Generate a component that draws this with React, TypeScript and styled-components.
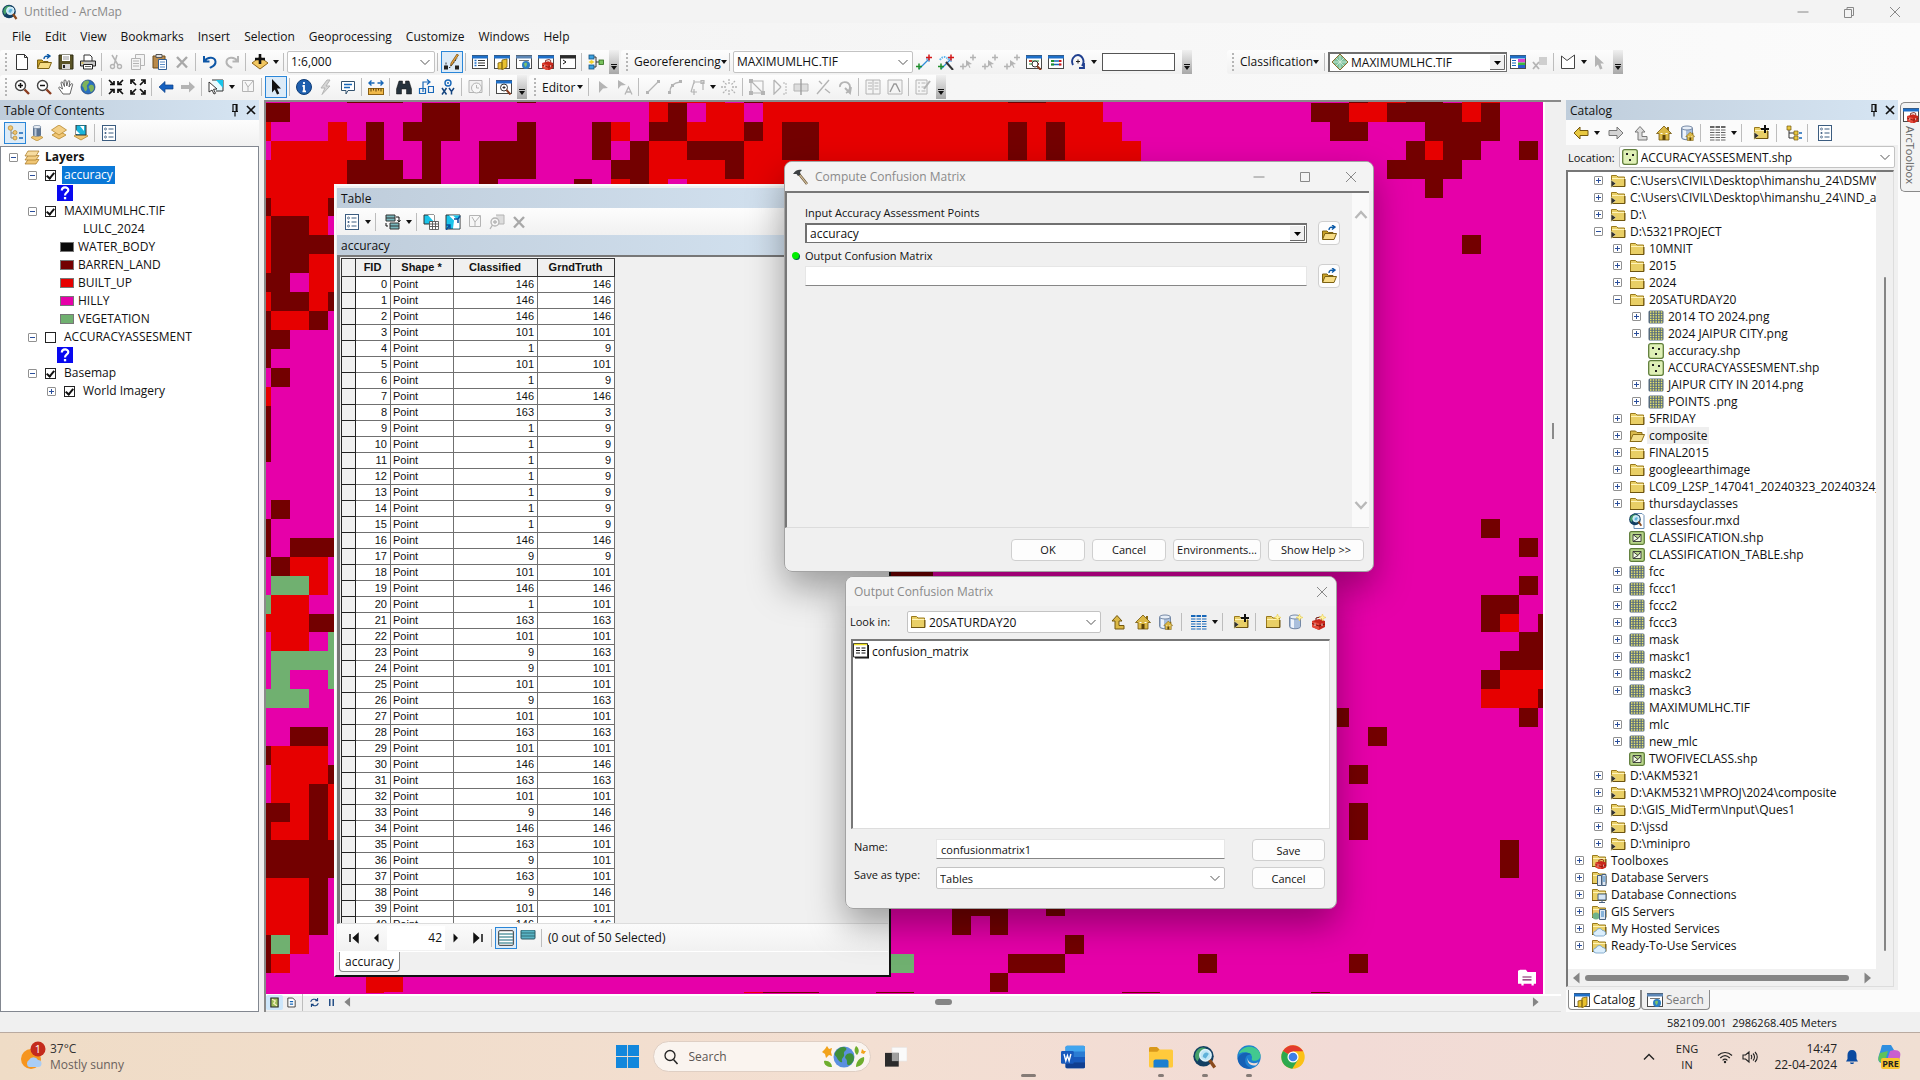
import React from 'react';
import styled, { createGlobalStyle, css } from 'styled-components';

const ui = `'Open Sans', 'Noto Sans', sans-serif`;
const grey = '#b4b4b4';

const Global = createGlobalStyle`
  *, *::before, *::after { box-sizing: border-box; }
  body { margin: 0; background: #f0f0f0; }
  body, button, input, select { font-family: ${ui}; font-size: 12px; color: #111; }
  button { border: 0; background: none; padding: 0; cursor: default; white-space: nowrap; }
  ul { margin: 0; padding: 0; list-style: none; }
  svg { display: block; flex: none; }
`;

/* ---------- icons, all on a 16 unit grid ---------- */
const Folder = ({ dark = false }: { dark?: boolean }) => (
  <>
    <path d="M1.5 4V2.5h5L8 4h6.500v9.500h-13z" fill="#e9cf66" stroke="#9a7a1c" />
    <path d="M2 5.500h12.500" stroke="#fff3b8" />
    <path d="M1 13.500h14V6" stroke="#6e5510" fill="none" />
    {dark && <path d="M1 7l5 3.500-5 4z" fill="#333" stroke="#f6e7a5" strokeWidth=".6" />}
  </>
);
const OpenFolder = (
  <>
    <path d="M1.500 14V6H6l1.500 1.500H12V9" fill="#c9a227" stroke="#7d6213" />
    <path d="M1.500 14.500l2.500-6h11.500l-2.500 6z" fill="#f6dc85" stroke="#7d6213" />
  </>
);
const Cyl = (
  <>
    <path d="M2.500 3v9.500c0 3 11 3 11 0V3" fill="#a9bfdc" stroke="#7488a5" />
    <path d="M4 5v8c1.500 1 3 1 3 1V5z" fill="#eef4fb" />
    <ellipse cx="8" cy="3" rx="5.500" ry="2" fill="#e7eef7" stroke="#7488a5" />
  </>
);
const House = (
  <>
    <path d="M11 2h2v4h-2z" fill="#8a6a15" />
    <path d="M8 1L.500 8.500H3v6.500h10V8.500h2.500z" fill="#dbb845" stroke="#72570e" strokeWidth=".8" />
    <path d="M6.500 10h3v5h-3z" fill="#5b430a" />
    <path d="M4.500 8.500h2M9.500 8.500h2" stroke="#fff" />
  </>
);
const Win = ({ c = '#1e6fc8' }: { c?: string }) => (
  <>
    <rect x=".5" y="1.500" width="15" height="13" fill="#fff" stroke="#4a4a4a" />
    <path d="M0 3h16" stroke={c} strokeWidth="3" />
  </>
);
const Toolbox = (
  <>
    <path d="M2 7l7-2 6 2v6l-6 3-7-3z" fill="#c8271b" />
    <path d="M2 7l7 2.500V16l-7-3z" fill="#e44a3a" />
    <path d="M6 6V4l4-1 2 1v2" stroke="#6b0f08" fill="none" />
    <path d="M2 9.500l7 2.500 6-2" stroke="#7d1209" fill="none" />
    <path d="M5 9.500v2.500M12 9.500v2.500" stroke="#f3d7d2" />
  </>
);
const Earth = (
  <>
    <circle cx="8" cy="8" r="7" fill="#2a6fbf" stroke="#1c3f6e" strokeWidth=".7" />
    <path d="M3 4c2-3 6-3 6-1S6 6 7 8s-1 5-2 4-1-4-3-5zM10 6c3-1 4 1 4 3s-2 4-3 4-1-3-2-4 0-2 1-3z" fill="#7fb35a" />
  </>
);
const ArcGlobe = (
  <>
    <circle cx="7" cy="7.500" r="6.800" fill="#123f63" />
    <path d="M1.500 6c1-4 5-5 7-4L6 5 3 11C1.500 9.500 1 8 1.500 6z" fill="#46a06a" />
    <circle cx="8.300" cy="6.800" r="3.800" fill="#bfe6f6" stroke="#dff3fb" />
    <path d="M6.500 8c0-3 3-4 4-2l-2 3z" fill="#5fb1d9" />
    <path d="M11 10l3.500 5" stroke="#8a4a1c" strokeWidth="2.200" />
  </>
);
const Raster = (
  <>
    <rect x=".5" y="1.500" width="15" height="13" rx="1.500" fill="#566b7d" />
    {[3, 5.5, 8, 10.5, 13].map(y => (
      <path key={y} d={`M2 ${y}h12.500`} stroke="#efe96a" strokeWidth="1.500" strokeDasharray="1.500 1.200" />
    ))}
  </>
);
const Star = <path d="M12.500 0l1 2.500L16 3.500l-2.500 1-1 2.500-1-2.500L9 3.500l2.500-1z" fill="#fff3a0" stroke="#e6c93c" strokeWidth=".5" />;
const TableGrid = ({ c = '#1767b8' }: { c?: string }) => (
  <>
    <path d="M0 2h16" stroke={c} strokeWidth="2" strokeDasharray="4.500 1" />
    <path d="M0 5h16M0 7.500h16M0 10h16M0 12.500h16M0 15h16" stroke={c} strokeDasharray="4.500 1" />
  </>
);
const ListBox = ({ c = '#3b5c80' }: { c?: string }) => (
  <>
    <rect x="1.500" y=".5" width="13" height="15" fill="#fff" stroke={c} />
    <circle cx="4.500" cy="4" r="1" fill="none" stroke={c} strokeWidth=".8" />
    <circle cx="4.500" cy="8" r="1" fill={c} />
    <circle cx="4.500" cy="12" r="1" fill="none" stroke={c} strokeWidth=".8" />
    <path d="M7.500 4h5M7.500 8h5M7.500 12h5" stroke={c} />
  </>
);
const Layer = ({ y = 0 }: { y?: number }) => (
  <path d={`M8 ${3 + y}l7 4-7 4-7-4z`} fill="#f0c674" stroke="#b5862b" strokeWidth=".8" />
);
const Cloud = <path d="M5 15a2.500 2.500 0 010-5 3.500 3.500 0 016.500-.500A2.800 2.800 0 0112.500 15z" fill="#dbeefc" stroke="#6f9cc4" strokeWidth=".8" />;
const Cross = (a: string, b: string) => (
  <>
    <path d="M3 15l9-9" stroke="#2e8bd8" strokeWidth="1.300" />
    <path d="M10 5h3v3" fill="none" stroke="#2e8bd8" />
    <path d="M0 12.500h6M3 9.500v6" stroke={a} strokeWidth="1.500" />
    <path d="M10 3.500h6M13 .5v6" stroke={b} strokeWidth="1.500" />
  </>
);
const GreyCross = (
  <>
    <path d="M10 3.500h6M13 .5v6M0 12.500h6M3 9.500v6" stroke={grey} strokeWidth="1.500" />
    <path d="M6 6l6 4-3 .5 1.500 3-1 .5-1.500-3-2 2z" fill={grey} />
  </>
);

const icons: Record<string, React.ReactNode> = {
  newDoc: <path d="M2.500.5h8l3 3v12h-11zM10.500.5v3h3" fill="#fff" stroke="#333" />,
  open: <>{OpenFolder}<path d="M8 5c0-3 2-3 5-3M11 0l3 2-3 2.500" fill="none" stroke="#0b5aa8" strokeWidth="1.400" /></>,
  save: <><path d="M1 1h14v14H1z" fill="#5a5426" stroke="#2a2810" /><path d="M4 1h8v6H4z" fill="#fff" /><path d="M4 10h8v5H4z" fill="#d8d8d8" /><path d="M5 11h2v3H5z" fill="#222" /><path d="M5 3h6M5 5h6" stroke="#999" /></>,
  print: <><path d="M4 7V1h6l2 2v4" fill="#fff" stroke="#333" /><path d="M.5 7h15v5H.5z" fill="#c9c9c9" stroke="#222" /><path d="M3.500 10.500h9v4.500h-9z" fill="#fff" stroke="#222" /><path d="M1.500 9h2" stroke="#e4b400" /><path d="M5 12.500h6" stroke="#666" /></>,
  cut: <><path d="M4 1l6 10M9 1L6 11" stroke={grey} strokeWidth="1.500" fill="none" /><circle cx="4.500" cy="12.500" r="2" stroke={grey} fill="none" strokeWidth="1.400" /><circle cx="11.500" cy="12.500" r="2" stroke={grey} fill="none" strokeWidth="1.400" /></>,
  copy: <><path d="M5.500.5h9v11h-9z" fill="#f4f4f4" stroke={grey} /><path d="M1.500 4.500h9v11h-9z" fill="#f4f4f4" stroke={grey} /><path d="M3 7h6M3 9.500h6M3 12h6" stroke={grey} /></>,
  paste: <><path d="M1 2h12v12H1z" fill="#b98a4b" stroke="#6a4a1c" /><path d="M4 .5h6v3H4z" fill="#ddd" stroke="#555" /><path d="M6.500 5.500h8v10h-8z" fill="#fff" stroke="#335f94" /><path d="M8 8h5M8 10.500h5M8 13h5" stroke="#5b8cc5" /></>,
  del: <path d="M3 3l10 10.500M13 3L3 13.500" stroke="#a8a8a8" strokeWidth="2.400" />,
  undo: <path d="M2 2v5.500h5.500M2.500 7C6 2 13 3 13.500 7.500S9 13 8 14" stroke="#0d56a6" strokeWidth="2" fill="none" />,
  redo: <path d="M14 2v5.500H8.500M13.500 7C10 2 3 3 2.500 7.500S7 13 8 14" stroke={grey} strokeWidth="2" fill="none" />,
  add: <><path d="M8 3l8 6-8 6-8-6z" fill="#f2c760" stroke="#8c6418" /><path d="M8 0v10M3 5h10" stroke="#111" strokeWidth="2.600" /></>,
  editPen: <><path d="M2 13.500h4l7-9M2 13.500V8" stroke="#333" fill="none" strokeDasharray="2 1" /><path d="M0 11.500h4v4H0zM11 11.500h4v4h-4z" fill="#222" /><path d="M14.500 1l-6 9-2 2 .5-3L13 0z" fill="#eda63c" stroke="#69440b" strokeWidth=".7" /></>,
  toc: <><Win /><path d="M2.500 6.500h2M2.500 9h2M2.500 11.500h2" stroke="#1e6fc8" strokeWidth="1.400" /><path d="M6 6.500h7M6 9h7M6 11.500h7" stroke="#333" /></>,
  catWin: <><Win /><path d="M4 9l4-1v7H4zM8 6l5-1v8l-5 3z" fill="#e8c12f" stroke="#7c5f0b" strokeWidth=".8" /></>,
  searchWin: <><Win c="#5c86b5" /><path d="M3 6.500h10" stroke="#777" /><circle cx="10" cy="11" r="4" fill="#2e7fc2" /><path d="M8 10c1-2 3-1 3 0s-1 3-2 3z" fill="#7cc36a" /></>,
  toolWin: <><Win /><g transform="translate(2.500 3) scale(.85)">{Toolbox}</g></>,
  pyWin: <><Win c="#2b2b2b" /><path d="M3 6l3 2-3 2" stroke="#111" fill="none" /></>,
  model: <><path d="M5 3h3v10H5M8 8h3" stroke="#333" fill="none" /><rect x="1" y="1" width="5" height="4" fill="#3aa0e0" stroke="#17527c" strokeWidth=".8" /><rect x="1" y="11" width="5" height="4" fill="#3aa0e0" stroke="#17527c" strokeWidth=".8" /><path d="M3.500 6l3 2-3 2-3-2z" fill="#f4d32d" /><rect x="11" y="6" width="4.500" height="4.500" fill="#79c25d" stroke="#2f6b1b" strokeWidth=".8" /></>,
  zin: <><circle cx="6.500" cy="6.500" r="5" fill="#fff" stroke="#444" strokeWidth="1.400" /><path d="M4 6.500h5M6.500 4v5" stroke="#111" strokeWidth="1.500" /><path d="M10.500 10.500l4.500 4.500" stroke="#8a3b1f" strokeWidth="2.400" /></>,
  zout: <><circle cx="6.500" cy="6.500" r="5" fill="#fff" stroke="#444" strokeWidth="1.400" /><path d="M4 6.500h5" stroke="#111" strokeWidth="1.500" /><path d="M10.500 10.500l4.500 4.500" stroke="#8a3b1f" strokeWidth="2.400" /></>,
  pan: <path d="M5 15L1 9.500c-1-1.500 1-2 2-.5L4.500 10 3 4c0-1.500 1.500-1.500 2 0L6.500 7.500 6 2c0-1.500 2-1.500 2 0l.8 5L10 2.500c.5-1.500 2-1 1.800.5L11 8l2-3c1-1 2 0 1.500 1L12 15z" fill="#fff" stroke="#555" strokeWidth=".9" />,
  earth: Earth,
  fixIn: <path d="M1 1l4.500 4.500M2 5.500h4V2M15 1l-4.500 4.500M14 5.500h-4V2M1 15l4.500-4.500M2 10.500h4V14M15 15l-4.500-4.500M14 10.500h-4V14" stroke="#111" strokeWidth="1.700" fill="none" />,
  fixOut: <path d="M6 6L1.500 1.500M1 5V1h4M10 6l4.500-4.500M15 5V1h-4M6 10l-4.500 4.500M1 11v4h4M10 10l4.500 4.500M15 11v4h-4" stroke="#111" strokeWidth="1.700" fill="none" />,
  back: <path d="M1 8l6-5.500V6h8v4H7v3.500z" fill="#1560bf" stroke="#0b3f86" strokeWidth=".7" />,
  fwd: <path d="M15 8L9 2.500V6H1v4h8v3.500z" fill={grey} />,
  select: <><path d="M4 1h11v11H8" fill="#e8fbff" stroke="#333" /><path d="M8 1h7v8z" fill="#19c4ea" /><path d="M1 3l8 7-3.500.3 2 4-1.500.7-2-4L1 13z" fill="#fff" stroke="#222" strokeWidth=".9" /></>,
  clear: <path d="M2.500 1.500h11v11h-11zM5 3l3 5 5-6M8 8v4" fill="#f6f6f6" stroke={grey} />,
  cursor: <path d="M4 0l9 9.500H9l2.300 5-2.300 1L6.800 10.500 4 13.500z" fill="#111" />,
  info: <><circle cx="8" cy="8" r="7.500" fill="#1e5fae" stroke="#0f3d78" /><path d="M8 3v2M6.500 7H8v5M6.500 12.300h3.500" stroke="#fff" strokeWidth="1.800" /></>,
  bolt: <path d="M9 1L3 9h4l-3 6.500L12 7H8l4-6z" fill="#d6d6d6" stroke={grey} />,
  html: <><path d="M1.500 2.500h13v9H8l-2 3.500v-3.500H1.500z" fill="#fff" stroke="#34536f" /><path d="M4 5.500h8M4 8.500h6" stroke="#1767b8" strokeWidth="1.400" /></>,
  measure: <><rect x=".5" y="9.500" width="15" height="6" fill="#f0b849" stroke="#8a5f12" /><path d="M3 9.500v3M5.500 9.500v2M8 9.500v3M10.500 9.500v2M13 9.500v3" stroke="#5d3f08" /><path d="M1 4h5.500M3.500 1.500L1 4l2.500 2.500M15 4H9.500M12.500 1.500L15 4l-2.500 2.500" stroke="#1767b8" strokeWidth="1.400" fill="none" /></>,
  binoc: <path d="M3 2h3.500v3h3V2H13l2.500 8v5h-5v-5h-5v5h-5v-5z" fill="#26323c" stroke="#111" strokeWidth=".5" />,
  route: <path d="M5 13V3h6M9 .5L12 3 9 5.500M1.500 9.500h6v5h-6zM10.500 7.500h5v6h-5z" stroke="#1767b8" fill="none" strokeWidth="1.200" />,
  xy: <><circle cx="8" cy="4" r="3" fill="none" stroke="#1767b8" strokeWidth="1.400" /><circle cx="8" cy="4" r="1" fill="#1767b8" /><path d="M2 9l4.500 6.500M6.500 9L2 15.500M9 9l2.500 3.500L14 9M11.500 12v3.500" stroke="#15457f" strokeWidth="1.500" fill="none" /></>,
  time: <><path d="M1 1.500h13v12H1z" fill="#f2f2f2" stroke={grey} /><circle cx="8.500" cy="9" r="5" fill="#f7f7f7" stroke={grey} /><path d="M8.500 6v3h2.500" stroke={grey} fill="none" /></>,
  magWin: <><Win /><circle cx="8" cy="8.500" r="3.500" fill="#fff" stroke="#333" /><path d="M6.500 8.500h3M8 7v3" stroke="#333" /><path d="M10.500 11l4 4.500" stroke="#8a3b1f" strokeWidth="2" /></>,
  gArrow: <path d="M4 2l9 7-5 .5L4 14z" fill={grey} />,
  gArrowA: <><path d="M1 1l8 5-5 .5L1 10z" fill={grey} /><path d="M8 15.500L11.500 8l3.500 7.500M9.500 13h4" stroke={grey} fill="none" strokeWidth="1.300" /></>,
  gLine: <><path d="M2 14L14 2" stroke={grey} strokeWidth="1.300" /><path d="M1 12h3v3H1zM12 1h3v3h-3z" fill={grey} /></>,
  gArc: <><path d="M3 13C3 8 6 4 13 3" stroke={grey} strokeWidth="1.300" fill="none" /><path d="M1 12h3v3H1zM12 1h3v3h-3zM4 5h3v3H4z" fill={grey} /></>,
  gPoly: <path d="M2 13L5 3h9v8M5 1v4M12 1.500h3v3h-3zM2 13h6M5 10v6" stroke={grey} strokeWidth="1.200" fill="none" />,
  gBurst: <path d="M8 0v5M8 11v5M0 8h5M11 8h5M2 2l4 4M14 2l-4 4M2 14l4-4M14 14l-4-4" stroke={grey} strokeDasharray="2 1" strokeWidth="1.300" />,
  gVert: <><path d="M2 2h12v12H2zM2 2l12 12" stroke={grey} fill="none" strokeWidth="1.100" /><path d="M0 0h4v4H0zM12 12h4v4h-4zM0 12h4v4H0z" fill={grey} /></>,
  gResh: <><path d="M3 1v14l7-7M3 1l7 7" stroke={grey} fill="none" strokeWidth="1.300" /><path d="M12 4h3v11h-3" stroke={grey} fill="none" strokeDasharray="2 1" /></>,
  gCut: <><path d="M1 5h14v7H1z" fill="#ddd" stroke={grey} /><path d="M8 0v16" stroke="#999" strokeWidth="1.300" /></>,
  gSplit: <path d="M2 15L14 1M4 2l3 3M10 10l5 4" stroke={grey} strokeWidth="1.400" />,
  gRot: <path d="M3 8C2 2 13 1 13 8c0 3-2 5-4 6M8 9l5 5 1-6" stroke={grey} strokeWidth="1.900" fill="none" />,
  gTable: <path d="M1 1h14v14H1zM8 1v14M3 4h4M3 7h4M3 10h4M9.500 4h4M9.500 7h4M9.500 10h4" stroke={grey} fill="#f5f5f5" />,
  gSketch: <><path d="M1 1h14v14H1z" fill="#f5f5f5" stroke={grey} /><path d="M3 13l4-8h2l4 8" stroke="#999" fill="none" strokeWidth="1.400" /></>,
  gForm: <><path d="M1 1h11v14H1zM3 4h2M3 8h2M3 12h2M6.500 4h4M6.500 8h4M6.500 12h4" stroke={grey} fill="#f5f5f5" /><path d="M15 2L9 10" stroke={grey} strokeWidth="2" /></>,
  cp: Cross('#1f8f2b', '#d41818'),
  cpAuto: <>{Cross('#1f8f2b', '#d41818')}<path d="M2 6c2-4 7-4 8 0" stroke="#5fb8f0" strokeDasharray="1.500 1" fill="none" strokeWidth="2" /><path d="M8 8l7 8" stroke="#333" strokeWidth="2" /></>,
  gcp: GreyCross,
  linkWin: <><Win /><path d="M3 7h10M3 10h10" stroke="#1f8f2b" /><path d="M3 7h3M10 10h3" stroke="#d41818" strokeWidth="1.500" /><circle cx="9" cy="10" r="3" fill="#fff" stroke="#333" /><path d="M11 12l4 4" stroke="#8a3b1f" strokeWidth="2" /></>,
  linkTab: <><Win /><path d="M3 7h10M3 10.500h10" stroke="#1767b8" strokeWidth="1.500" /><path d="M3 7h3M3 10.500h3" stroke="#1f8f2b" strokeWidth="2" /><path d="M11 7h2.500M11 10.500h2.500" stroke="#d41818" strokeWidth="2" /></>,
  rot: <><path d="M3 11C0 5 5 1 8 1s8 5 4 11M9 14h5V9" stroke="#1f3f8f" strokeWidth="1.900" fill="none" /><path d="M8 5.500v4M6 7.500h4" stroke="#222" /></>,
  diamond: <><path d="M8 0l8 8-8 8-8-8z" fill="#7fc2a0" stroke="#8a6d2a" /><path d="M4 4l8 8M12 4l-8 8M8 1v14M1 8h14" stroke="#d9f0dd" strokeWidth=".8" /></>,
  train: <><Win /><path d="M2 6.500h4M2 9h4M2 11.500h4" stroke="#1767b8" /><path d="M8 5h7v3.500H8z" fill="#e03fd0" /><path d="M8 8.500h7v2.500H8z" fill="#3fb83f" /><path d="M8 11h7v3H8z" fill="#2a5fd0" /></>,
  gClassX: <><path d="M7 3h8v8H7z" fill="#cfcfcf" /><path d="M1 8l6 7M7 8l-6 7" stroke={grey} strokeWidth="1.800" /></>,
  poly: <path d="M1.500 14.500V2L7 6.500 14.500 1v13.500z" fill="#fff" stroke="#444" />,
  gCursor: <path d="M3 1l9 8.500H8.500l2 5L8 15.500 6 10.500 3 13z" fill={grey} />,
  byOrder: <><path d="M4 4v9h6M4 8h6" stroke="#888" fill="none" /><circle cx="3.500" cy="3" r="2.300" fill="#f0c674" stroke="#b5862b" strokeWidth=".7" /><circle cx="8" cy="7.500" r="2" fill="#f0c674" stroke="#b5862b" strokeWidth=".7" /><circle cx="8" cy="13" r="2" fill="#f0c674" stroke="#b5862b" strokeWidth=".7" /><path d="M12 8h4M12 13h4" stroke="#1767b8" strokeWidth="1.500" /></>,
  bySource: <><path d="M8 9l6 3.500L8 16l-6-3.500z" fill="#f0c674" stroke="#b5862b" strokeWidth=".7" /><path d="M4 2v8c0 2 8 2 8 0V2" fill="#5e7491" /><path d="M5.500 3v8h2V3z" fill="#b9c8da" /><ellipse cx="8" cy="2" rx="4" ry="1.600" fill="#e8eef5" stroke="#5e7491" strokeWidth=".6" /></>,
  byVis: <><Layer y={3} /><path d="M8 0l7.500 5L8 10 .5 5z" fill="#f3cf86" stroke="#b5862b" strokeWidth=".8" /></>,
  bySel: <><Layer y={4} /><path d="M3 0h10v10H3z" fill="#19b4da" stroke="#333" /><path d="M7 1l4 5V1zM3 5l4 4H3z" fill="#fff" /></>,
  list: <ListBox />,
  layers: <><path d="M4 10.500h11l-3 4.500H1z" fill="#f0c674" stroke="#a37420" strokeWidth=".7" /><path d="M4 6.500h11l-3 4.500H1z" fill="#f3cf86" stroke="#a37420" strokeWidth=".7" /><path d="M4 2h11l-3 5H1z" fill="#f7dca0" stroke="#a37420" strokeWidth=".7" /></>,
  relate: <><path d="M1 1h9v6H1zM5 9h9v6H5z" fill="#79b7bd" stroke="#333" /><path d="M1 4h9M5 12h9" stroke="#333" /><path d="M11 3h3v4M12.500 6l1.500 2 1.500-2M3 12H1V9" fill="none" stroke="#111" /></>,
  selTab: <><path d="M1 1h10v9H1z" fill="#19c4ea" stroke="#333" /><path d="M5 1h6v7z" fill="#fff" /><path d="M6.500 7.500h9v8h-9zM6.500 10h9M6.500 12.500h9M9.500 7.500v8M12.500 7.500v8" fill="#fff" stroke="#555" strokeWidth=".9" /></>,
  switchSel: <><path d="M1 1h14v14H1z" fill="#19c4ea" stroke="#333" /><path d="M4 1.500l5 5-1 8h6.500V1.500z" fill="#fff" /><path d="M8 1.500l4 4 2.500-1v-3z" fill="#19c4ea" /><path d="M9 5h4v4M1 11h4v4M5 11l-4 5M13 5l2-3" stroke="#0d4f9a" fill="none" strokeWidth="1.500" /></>,
  gZoomSel: <><path d="M7 1h8v9H9" fill="#ddd" stroke={grey} /><circle cx="6" cy="8" r="4" fill="#f5f5f5" stroke={grey} strokeWidth="1.300" /><path d="M4 8h4M6 6v4M3.500 11L1 15" stroke={grey} strokeWidth="1.300" /></>,
  hammer: <><path d="M6 5l8 10" stroke="#6f5a3c" strokeWidth="2.600" /><path d="M6 5l8 10" stroke="#d9c7a3" strokeWidth="1.200" /><path d="M0 5C2 1 6 0 9 1L7 3l.5 2.500L5 7 3.500 5z" fill="#3c4043" /></>,
  up: <path d="M6 15h8v-3.500H9V7h3L7 1.500 2 7h3v8z" fill="#dbb845" stroke="#72570e" />,
  gUp: <path d="M6 15h8v-3.500H9V7h3L7 1.500 2 7h3v8z" fill="#ddd" stroke="#777" />,
  yBack: <path d="M1 8l6-6v3.500h8v5H7V14z" fill="#e8c840" stroke="#72570e" />,
  gNext: <path d="M15 8L9 2v3.500H1v5h8V14z" fill="#d4d4d4" stroke="#777" />,
  house: House,
  dbHouse: <>{Cyl}<g transform="translate(6.500 6.500) scale(.6)">{House}</g></>,
  gridBlue: <TableGrid />,
  gridGrey: <TableGrid c="#666" />,
  connect: <><Folder dark /><path d="M12 0v8M8 4h8" stroke="#111" strokeWidth="2" /></>,
  treeIc: <><path d="M3 3v10h6M3 8h6" stroke="#333" fill="none" /><path d="M1 1h4v4H1zM8 6h4v4H8zM8 11h4v4H8z" fill="#e8c840" stroke="#72570e" strokeWidth=".7" /><path d="M13 8h3M13 13h3" stroke="#1767b8" strokeWidth="1.500" /></>,
  newFolder: <><Folder />{Star}</>,
  newDb: <>{Cyl}{Star}</>,
  newTool: <>{Toolbox}{Star}</>,
  folder: <Folder />,
  folderCon: <Folder dark />,
  folderOpen: <><path d="M1.500 13V3h5L8 4.500h5V7" fill="#d9b94c" stroke="#8a6d17" /><path d="M1 13.500l3-7h11.500l-3 7z" fill="#f3de8c" stroke="#8a6d17" /></>,
  raster: Raster,
  pointShp: <><rect x=".7" y=".7" width="14.600" height="14.600" rx="2" fill="#dff0b6" stroke="#5f7d3a" strokeWidth="1.300" /><path d="M4 4h2v2H4zM10 5h2v2h-2zM7 10h2v2H7z" fill="#222" /></>,
  polyShp: <><rect x=".7" y="1.700" width="14.600" height="12.600" rx="1.500" fill="#b8d68a" stroke="#5f7d3a" strokeWidth="1.300" /><path d="M4 4.500h8v7H4zM4 4.500l5 4 3-4M9 8.500l-5 3" fill="#f4fbe6" stroke="#333" strokeWidth=".9" /></>,
  mxd: <><path d="M5 .5h8l2 2v13H5z" fill="#fff" stroke="#6b8fb5" /><g transform="scale(.85)">{ArcGlobe}</g></>,
  fTool: <><Folder /><g transform="translate(3 4) scale(.8)">{Toolbox}</g></>,
  fServer: <><Folder /><path d="M6.500 5.500h4v10h-4zM11 4.500h4v11h-4z" fill="#dfe8f2" stroke="#47617f" /><path d="M12 7h2M12 9h2M12 11h2" stroke="#2e7fc2" /></>,
  fDb: <><Folder /><path d="M7 7h8v6H7z" fill="#d6e6f5" stroke="#47617f" /><path d="M11 13v2M8 15.500h6" stroke="#47617f" /></>,
  fGis: <><Folder /><circle cx="5" cy="12" r="3.500" fill="#6fb38a" /><path d="M8.500 5.500h6v10h-6z" fill="#dfe8f2" stroke="#47617f" /><path d="M10 8h3M10 10h3M10 12h3" stroke="#2e7fc2" /></>,
  fCloud: <><Folder />{Cloud}</>,
  dbf: <><path d="M2 2h14v13.500H2z" fill="#111" /><path d="M.5.5h14v13.500H.5z" fill="#fff" stroke="#333" /><path d="M1 1.500h13" stroke="#f0e020" strokeWidth="1.600" /><path d="M3 5h4M3 7.500h4M3 10h4M8.500 5h4M8.500 7.500h4M8.500 10h4" stroke="#111" strokeWidth="1.200" /></>,
  quest: <><rect width="16" height="16" fill="#0808f0" /><path d="M4.800 5.500c0-4 6.500-4 6.500-.5C11.300 7.500 8 7.300 8 10.500" stroke="#fff" strokeWidth="2.200" fill="none" /><path d="M6.900 12h2.300v2.300H6.900z" fill="#fff" /></>,
  first: <path d="M4 4v8M12 4v8L7.500 8z" stroke="#111" fill="#111" strokeWidth="1.500" />,
  prev: <path d="M10.500 3.500v9L6 8z" fill="#111" />,
  next: <path d="M5.500 3.500v9L10 8z" fill="#111" />,
  last: <path d="M12 4v8M4 4v8l4.500-4z" stroke="#111" fill="#111" strokeWidth="1.500" />,
  allRec: <><rect x=".7" y=".7" width="14.600" height="14.600" rx="1" fill="#fff" stroke="#333" /><path d="M1 4h14M1 7h14M1 10h14M1 13h14" stroke="#5f9aa5" strokeWidth="1.600" /></>,
  selRec: <><rect x="1" y="0" width="14" height="9" rx="1" fill="#59b4c4" stroke="#2a5a64" /><path d="M1 3h14M1 6h14" stroke="#2a5a64" strokeWidth=".8" /></>,
  dataV: <><path d="M3.500 2.500h9v11h-9z" fill="#9fbf5a" stroke="#222" strokeWidth="1.300" /><path d="M5 4l4 2-2 3 4 3" stroke="#f5f0c0" fill="none" strokeWidth="1.400" /></>,
  layoutV: <><path d="M3.500 2.500h6l3 3v8h-9z" fill="#fff" stroke="#222" /><path d="M6 7h4M6 10h4" stroke="#1767b8" strokeWidth="1.500" /></>,
  refresh: <path d="M2.500 7C3 3 9 2 12 5M12.500 1.500V5.500H9M13.500 9c-.5 4-6.500 5-9.500 2M3.500 14.500V10.500H7" stroke="#12407d" fill="none" strokeWidth="1.500" />,
  pause: <path d="M5.500 3v10M10.500 3v10" stroke="#12407d" strokeWidth="2" />,
  arrL: <path d="M11.500 2.500v11L5 8z" fill="#858585" />,
  arrR: <path d="M4.500 2.500v11L11 8z" fill="#858585" />,
  chevUp: <path d="M2.500 11L8 5l5.500 6" stroke="#b9b9b9" strokeWidth="2.400" fill="none" />,
  chevDn: <path d="M2.500 5L8 11l5.500-6" stroke="#b9b9b9" strokeWidth="2.400" fill="none" />,
  pin: <path d="M5 9.500h6M6 9.500v-7h4v7M9.200 2.500v7M8 9.500v5" stroke="#111" fill="none" strokeWidth="1.200" />,
  shut: <path d="M4 4l8 8M12 4l-8 8" stroke="#111" strokeWidth="1.700" />,
  wMin: <path d="M2.500 8h11" stroke="#888" />,
  wMax: <path d="M3.500 3.500h9v9h-9z" stroke="#888" fill="none" />,
  wRest: <path d="M3.500 5.500h7v8h-7zM6 5.500v-2h6.500v8h-2" stroke="#888" fill="none" />,
  wX: <path d="M3 3l10 10M13 3L3 13" stroke="#888" />,
  note: <><path d="M0 2.500L2 1.500h5l1.500 2H16V14h-2v1.500h-2V14H5v1.500H3V14H0z" fill="#fff" /><path d="M4 8h8M4 10.500h8" stroke="#7a1660" /></>,
  arc: ArcGlobe,
  win: <path d="M0 0h7.700v7.700H0zM8.300 0H16v7.700H8.300zM0 8.300h7.700V16H0zM8.300 8.300H16V16H8.300z" fill="#1287dc" />,
  mag: <><circle cx="7" cy="6.500" r="5" stroke="#222" strokeWidth="1.300" fill="none" /><path d="M10.500 10.500l4 4.500" stroke="#222" strokeWidth="1.500" /></>,
  taskView: <><path d="M5 1h11v10H5z" fill="#fafafa" stroke="#e2e2e2" strokeWidth=".4" /><path d="M0 5h10v10H0z" fill="#2b2b2b" /><path d="M5 5h5v6H5z" fill="#a0a0a0" /></>,
  word: <><rect x="3" y=".5" width="13" height="15" rx="1" fill="#2b7cd3" /><path d="M3 8h13v3.500H3z" fill="#185abd" /><path d="M3 11.500h13v3a1 1 0 01-1 1H4a1 1 0 01-1-1z" fill="#103f91" /><path d="M3 1.500a1 1 0 011-1h11a1 1 0 011 1V4.300H3z" fill="#41a5ee" /><rect x="0" y="4" width="8.500" height="8.500" rx=".8" fill="#185abd" /><path d="M2 6l1.200 4.500L4.300 7l1.100 3.500L6.600 6" stroke="#fff" fill="none" strokeWidth=".9" /></>,
  explorer: <><path d="M0 2.500a1.200 1.200 0 011.200-1.200h4L7 3h8a1 1 0 011 1v10a1 1 0 01-1 1H1a1 1 0 01-1-1z" fill="#ffca3c" /><path d="M0 2.500a1.200 1.200 0 011.200-1.200h4L7 3 5.500 4.500H0z" fill="#d9981a" /><path d="M3 11a1.300 1.300 0 011.300-1.300h7.400A1.300 1.300 0 0113 11v4H3z" fill="#1b7fd0" /></>,
  edge: <><circle cx="8" cy="8" r="7.800" fill="#1c7fd0" /><path d="M1 6C3 0 13-1 15.500 6c.6 3-1.500 4.500-4 4.500-2 0-1.800-1-1.500-2C10.500 5 4 3.500 1 6z" fill="#42c98f" /><path d="M6 8c-1.500 3 0 6.500 4 7.500-5 1.500-9.500-2-9.500-6.500C1.500 5 8 4 9.800 6.500 8 6 6.500 7 6 8z" fill="#1560b5" /><path d="M7.300 8.500c-.5 3 3 4.500 7 3l-1.500 2c-4 1-6.500-2-5.500-5z" fill="#f0dcd5" /></>,
  chrome: <><circle cx="8" cy="8" r="7.800" fill="#fbc116" /><path d="M8 8L1.300 4A7.800 7.800 0 0114.800 4.200H8z" fill="#e33b2e" /><path d="M1.300 4A7.800 7.800 0 007.500 15.800L11.300 9.800 8 8z" fill="#2da94f" /><path d="M1.300 4l3.500 6 3.200 1.500" fill="#2da94f" /><circle cx="8" cy="8" r="3.700" fill="#fff" /><circle cx="8" cy="8" r="2.900" fill="#3f7fe8" /></>,
  caretUp: <path d="M3 10.500L8 5.500l5 5" stroke="#222" fill="none" strokeWidth="1.400" />,
  wifi: <><path d="M1 6.500c4-4 10-4 14 0M3.300 9c3-3 6.500-3 9.500 0M5.600 11.300c1.500-1.500 3.300-1.500 4.800 0" stroke="#222" fill="none" strokeWidth="1.200" /><circle cx="8" cy="13" r="1.200" fill="#222" /></>,
  vol: <path d="M1 6h2.500L7 3v10L3.500 10H1zM9 6c1 1 1 3 0 4M11 4.500c2 2 2 5 0 7M13 3c3 3 3 7 0 10" stroke="#222" fill="none" strokeWidth="1.100" />,
  bell: <><path d="M8 1c3 0 4.500 2 4.500 5v4L14 12.500H2L3.500 10V6C3.500 3 5 1 8 1z" fill="#0a4aa0" /><path d="M6 13.500h4c0 2-4 2-4 0z" fill="#0a4aa0" /></>,
};

const Icon = ({ n, s = 16 }: { n: string; s?: number }) => (
  <svg width={s} height={s} viewBox="0 0 16 16" fill="none" aria-hidden="true">{icons[n]}</svg>
);

/* ---------- shared controls ---------- */
const IconBtn = styled.button<{ $on?: boolean; $w?: number }>`
  width: ${p => p.$w ?? 22}px; height: 22px; flex: none;
  display: inline-flex; align-items: center; justify-content: center;
  ${p => p.$on && css`background: #dcebf8; border: 1px solid #2a86d8;`}
`;
const Sep = styled.span<{ $wide?: boolean }>`
  width: 1px; height: 18px; flex: none; background: #bdbdbd; margin: 0 ${p => (p.$wide ? 6 : 3)}px 0 2px;
`;
const CaretGlyph = styled.span`
  width: 0; height: 0; flex: none; border: 3px solid transparent; border-top: 4px solid #111; border-bottom: 0;
`;
const CaretBtn = styled.button`
  width: 10px; height: 22px; flex: none; display: inline-flex; align-items: center; justify-content: center;
`;
const Caret = () => <CaretBtn aria-label="More options"><CaretGlyph /></CaretBtn>;
const B = ({ n, on, w }: { n: string; on?: boolean; w?: number }) => (
  <IconBtn $on={on} $w={w} aria-label={n}><Icon n={n} /></IconBtn>
);

const SelectWrap = styled.span<{ $w?: number; $classic?: boolean }>`
  position: relative; display: inline-flex; align-items: center; background: #fff; min-width: 0;
  ${p => (p.$w ? `width: ${p.$w}px; flex: none;` : 'flex: 1;')}
  height: ${p => (p.$classic ? 20 : 22)}px;
  border: 1px solid ${p => (p.$classic ? '#707070' : '#c3c3c3')};
  ${p => !p.$classic && 'border-radius: 2px;'}
  svg:first-child { margin-left: 2px; }
  svg:last-child { position: absolute; right: 4px; pointer-events: none; }
  ${p => p.$classic && css`border-width: 2px 1px 1px 2px; svg:last-child { right: 1px; }`}
`;
const SelectEl = styled.select`
  appearance: none; border: 0; background: transparent; outline: 0; flex: 1; min-width: 0; height: 100%; padding: 0 22px 0 3px;
`;
const Select = ({ label, id, value, w, icon, classic }: { label?: string; id?: string; value: string; w?: number; icon?: string; classic?: boolean }) => (
  <SelectWrap $w={w} $classic={classic}>
    {icon && <Icon n={icon} />}
    <SelectEl id={id} aria-label={label} defaultValue={value}><option>{value}</option></SelectEl>
    {classic ? (
      <svg width="15" height="15" viewBox="0 0 15 15"><path d="M0 0h15v15H0z" fill="#f0f0f0" /><path d="M0 14.500h14.500V0" stroke="#696969" fill="none" /><path d="M4 6h7l-3.500 4z" fill="#000" /></svg>
    ) : (
      <svg width="10" height="10" viewBox="0 0 10 10"><path d="M.5 3L5 7.500 9.500 3" stroke="#555" fill="none" /></svg>
    )}
  </SelectWrap>
);

/* ---------- frame ---------- */
const Page = styled.div`
  min-height: 100vh; display: flex; flex-direction: column; background: linear-gradient(90deg, #f1f1f1, #fbfbfb);
`;
const TitleBar = styled.header`
  height: 23px; display: flex; align-items: center; gap: 6px; padding-left: 2px; background: #f3f3f3; color: #8a8a8a;
`;
const WindowBtns = styled.div<{ $end?: number }>`
  margin-left: auto; display: flex; align-items: center; gap: 30px; padding-right: ${p => p.$end ?? 0}px;
  button { width: 16px; height: 16px; }
`;
const MenuBar = styled.nav`
  height: 26px; display: flex; align-items: center; padding-left: 5px;
  button { padding: 0 7px; height: 22px; }
`;
const BarRow = styled.div`
  height: 26px; display: flex; align-items: center;
  &:first-of-type { height: 25px; }
`;
const Bar = styled.div<{ $gap?: number }>`
  display: flex; align-items: center; height: 24px; flex: none; margin-left: ${p => p.$gap ?? 0}px;
  background: linear-gradient(#fdfdfd, #f1f1f1); border-radius: 3px;
`;
const Grip = styled.span`
  width: 2px; height: 18px; margin: 0 4px 0 5px; flex: none;
  background: repeating-linear-gradient(#b5b5b5 0 2px, transparent 2px 4px);
`;
const MoreTab = styled.button`
  width: 10px; height: 24px; margin-left: 2px; flex: none;
  background: linear-gradient(#f0f0f0, #a8a8a8);
  display: inline-flex; flex-direction: column; align-items: center; justify-content: flex-end; gap: 1px; padding-bottom: 4px;
  &::before { content: ''; width: 6px; height: 1px; background: #111; }
`;
const BarLabel = styled.button<{ $w: number }>`
  width: ${p => p.$w}px; height: 22px; display: inline-flex; align-items: center; justify-content: space-between; padding: 0 3px 0 2px;
`;
const BarInput = styled.input`
  width: 73px; height: 18px; border: 1px solid #555; background: #fff; margin: 0 5px 0 3px; padding: 0 2px;
`;
const Work = styled.main`
  flex: 1; display: flex; min-height: 0; background: #f0f0f0;
`;

/* ---------- docked panels ---------- */
const Panel = styled.section<{ $w: number }>`
  width: ${p => p.$w}px; flex: none; display: flex; flex-direction: column; min-width: 0;
`;
const PanelHead = styled.div`
  height: 20px; flex: none; display: flex; align-items: center; padding: 0 0 0 4px;
  background: linear-gradient(90deg, #bfcddb, #d6e5f3);
  span { flex: 1; }
`;
const PanelTools = styled.div<{ $white?: boolean; $h?: number }>`
  height: ${p => p.$h ?? 26}px; flex: none; display: flex; align-items: center; padding: 0 4px;
  background: ${p => (p.$white ? '#fbfbfb' : 'linear-gradient(#fdfdfd, #f1f1f1)')};
`;
const TocList = styled.ul`
  flex: 1; background: #fff; border: 1px solid #828790; padding: 1px 0 0 7px;
`;
const TocRow = styled.li<{ $pad: number }>`
  height: 18px; display: flex; align-items: center; padding-left: ${p => p.$pad}px; white-space: nowrap;
  label { display: flex; align-items: center; }
`;
const TocIcon = styled.span`margin: 0 3px 0 6px;`;
const Expander = styled.button`
  width: 9px; height: 9px; flex: none; border: 1px solid #919191; border-radius: 1px; background: #fff;
  display: inline-flex; align-items: center; justify-content: center;
`;
const Exp = ({ open }: { open?: boolean }) => (
  <Expander aria-label={open ? 'Collapse' : 'Expand'}>
    <svg width="7" height="7" viewBox="0 0 7 7"><path d={open ? 'M1 3.500h5' : 'M1 3.500h5M3.500 1v5'} stroke="#2b4f9c" /></svg>
  </Expander>
);
const Tick = styled.input`
  appearance: none; width: 11px; height: 11px; margin: 0 6px 0 8px; border: 1px solid #222; background: #fff; flex: none;
  display: inline-grid; place-items: center;
  &:checked::after { content: ''; width: 5px; height: 8px; border: solid #111; border-width: 0 2px 2px 0; transform: rotate(40deg); }
`;
const RowText = styled.span<{ $sel?: boolean; $strong?: boolean }>`
  padding: 0 2px; line-height: 18px;
  ${p => p.$sel && 'background: #0a78d7; color: #fff;'}
  ${p => p.$strong && 'font-weight: 700;'}
`;
const Swatch = styled.i<{ $c: string }>`
  width: 14px; height: 10px; margin-right: 2px; border: 1px solid #777; background: ${p => p.$c};
`;

/* ---------- map ---------- */
const MapPane = styled.section`
  flex: 1; min-width: 0; margin: 0 5px; position: relative; display: grid;
  grid-template: 1fr 18px / 1fr 18px; border: 2px solid #8a8a8a; border-width: 2px 0 0 2px;
`;
const MapView = styled.div`
  position: relative; overflow: hidden; background: #e600a9; min-height: 880px;
  > svg { position: absolute; left: 0; top: 0; }
`;
const NoteMark = styled.span`
  position: absolute; right: 7px; bottom: 8px;
`;
const VScroll = styled.div`
  border-left: 2px solid #fff; display: flex; justify-content: center; padding-top: 321px;
  &::after { content: ''; width: 2px; height: 16px; background: #8a8a8a; }
`;
const HScroll = styled.div`
  grid-column: 1 / -1; border-top: 2px solid #fff; border-bottom: 1px solid #dcdcdc; display: flex; align-items: center; padding: 0 18px 3px 0;
`;
const HThumb = styled.span`
  width: 17px; height: 6px; border-radius: 3px; background: #858585; margin: 0 auto 0 45.5%;
`;
const ViewBtn = styled.button<{ $on?: boolean }>`
  width: 17px; height: 15px; flex: none; display: inline-flex; align-items: center; justify-content: center;
  ${p => p.$on && 'background: #cde6fa; border-radius: 2px;'}
`;

const D = '#730000', R = '#e60000', H = '#e600a9', G = '#70b070';
const colour: Record<string, string> = { D, R, H, G };
/* row: colour start-end ...; columns and rows are raster cells, -1 being the part cell at the edge */
const raster: Record<string, string> = {
  '-1': 'R20-43 D4-6 D13-13 H24-24 D25-25 D39-40 D57-57 R58-59 D60-61 R63-64',
  '0': 'D-1-0 D8-9 R20-43 D21-21 H22-22 H25-25 D55-56 R57-58 D59-62 R63-63 D64-64',
  '1': 'R-1--1 R3-3 D5-5 D7-9 D13-13 D17-17 R18-18 D20-21 R22-44 D25-25 D27-28 D39-39 D41-41 D56-57 D61-64',
  '2': 'R0-4 D5-5 D8-8 D11-13 D17-17 D19-19 R20-45 D22-24 D27-28 D39-39 D41-41 D60-60 R61-61 D62-63 D66-66',
  '3': 'R-1-3 D4-6 D8-8 D11-13 D18-19 R20-45 D24-24 D59-62',
  '4': 'R-1-3 D4-8 D11-11 D16-16 R18-18 D19-19 R20-45 H21-21 D61-61',
  '5': 'D-1--1 R0-2 D3-3', '6': 'R-1--1 D0-1 R2-2', '7': 'R-1--1 D0-3 D63-63', '8': 'R-1--1 D0-1 R2-3',
  '9': 'D-1-0 R2-3', '10': 'R-1--1 D0-1 R2-2 D3-3', '11': 'D-1--1 R0-1 D2-2', '12': 'D-1-0', '13': 'D-1--1',
  '14': 'D0-0', '15': 'R-1--1', '16': 'D-1--1', '17': 'D-1--1', '18': 'D-1--1', '21': 'D0-0',
  '22': 'D-1--1 D64-64', '23': 'D-1--1 D1-3 D66-66', '24': 'D0-0 R1-2 D32-34', '25': 'G0-1 R2-2 D66-66',
  '26': 'G-1--1 R0-1 D64-65', '27': 'R-1-1 D2-3 D64-64 R65-65 D67-67', '28': 'R0-1 G3-3 D66-67', '29': 'G0-3 D65-67',
  '30': 'G0-0 G3-3 D64-64 R65-67', '31': 'G-1-1 R64-66 D67-67', '32': 'D56-56 D66-66', '33': 'D1-2 D58-58',
  '34': 'D-1--1 R0-2', '35': 'R0-2 D3-3 D57-57', '36': 'R0-1 D2-2 R3-3', '37': 'D-1-0 R1-1 D2-2 R3-3 D57-57',
  '38': 'D-1--1 R0-1 D2-2 R3-3 D57-57', '39': 'D-1-3 D65-65', '40': 'D-1-3 D65-65', '41': 'R-1-1 D2-2',
  '42': 'R-1-1 D2-2 D36-38 D41-41', '43': 'R-1-1 D2-2 D36-36 D38-38', '44': 'D-1--1 G0-0 R1-1 D42-42',
  '45': 'D-1--1 R0-0 G32-33 D39-41 D49-49 D57-57', '46': 'R5-6 D38-38', '47': 'R5-5 R25-25 D26-28 D32-33 D45-46 D55-55',
};
const cell = 18.91;
const edgeX = (k: number) => Math.round(5 + k * cell);
const edgeY = (k: number) => Math.round(1 + k * cell);
const Imagery = () => (
  <svg width="1280" height="891" shapeRendering="crispEdges" aria-label="Classified raster">
    {Object.entries(raster).flatMap(([r, spec]) =>
      spec.split(' ').map((s, i) => {
        const m = /^([A-Z])(-?\d+)-(-?\d+)$/.exec(s)!;
        const row = Number(r), a = edgeX(Number(m[2])), b = edgeX(Number(m[3]) + 1);
        return <rect key={`${r}.${i}`} x={a} y={edgeY(row)} width={b - a} height={edgeY(row + 1) - edgeY(row)} fill={colour[m[1]]} />;
      }),
    )}
  </svg>
);

/* ---------- floating windows ---------- */
const TableWindow = styled.section`
  position: absolute; left: 68px; top: 82px; width: 557px; height: 793px; display: flex; flex-direction: column;
  background: #f0f0f0; border: 2px solid #fafafa; border-right-color: #111; border-bottom-color: #111; padding: 2px 1px 0 1px;
`;
const AttrFrame = styled.div`
  flex: 1; min-height: 0; overflow: hidden; border: 2px solid #777; border-right: 0; border-left-width: 3px; border-bottom: 1px solid #ddd; padding: 1px 0 0 1px;
`;
const Attr = styled.table`
  border-collapse: collapse; table-layout: fixed; width: 274px; background: #fff;
  font-family: 'Liberation Sans', Arial, sans-serif; font-size: 11px;
  td, th { height: 16px; padding: 0 3px 0 2px; border: 1px solid #707070; line-height: 13px; text-align: right; white-space: nowrap; }
  th { background: #f0f0f0; text-align: center; border-color: #333; height: 18px; }
  td:first-child { background: #f0f0f0; border-color: #222; }
  td:nth-child(3) { text-align: left; }
`;
const RecordBar = styled.div`
  height: 28px; flex: none; display: flex; align-items: center; padding-left: 6px; background: linear-gradient(#fbfbfb, #f1f1f1); border-bottom: 1px solid #fff;
`;
const RecordInput = styled.input`
  width: 58px; height: 24px; border: 0; background: #fff; text-align: right; padding: 0 3px;
`;
const SheetTabs = styled.div`
  height: 23px; flex: none; display: flex; align-items: flex-start; padding-left: 2px;
`;
const SheetTab = styled.button<{ $off?: boolean }>`
  height: 20px; padding: 0 5px; display: inline-flex; align-items: center; gap: 3px; border: 1px solid #8a8a8a; border-top: 0; border-radius: 0 0 4px 4px;
  background: ${p => (p.$off ? '#f0f0f0' : '#fff')}; color: ${p => (p.$off ? '#777' : '#111')};
`;
const Dialog = styled.section<{ $x: number; $y: number; $w: number; $h: number }>`
  position: absolute; left: ${p => p.$x}px; top: ${p => p.$y}px; width: ${p => p.$w}px; height: ${p => p.$h}px;
  display: flex; flex-direction: column; background: #f0f0f0; border: 1px solid #a3a3a3; border-radius: 8px; overflow: hidden;
`;
const DialogShadow = styled.div<{ $x: number; $y: number; $w: number; $h: number }>`
  position: absolute; left: ${p => p.$x}px; top: ${p => p.$y}px; width: ${p => p.$w}px; height: ${p => p.$h}px;
  border-radius: 8px; box-shadow: 0 16px 36px rgba(0, 0, 0, .35);
`;
const DialogHead = styled.div<{ $end: number }>`
  height: 29px; flex: none; display: flex; align-items: center; gap: 6px; padding: 0 ${p => p.$end}px 0 8px; background: #f3f3f3; color: #8a8a8a;
`;
const DialogBody = styled.div`
  flex: 1; display: flex; min-height: 0; margin-right: 4px; border: 2px solid #777; border-width: 2px 0 0 2px; border-bottom: 1px solid #dcdcdc;
`;
const Fields = styled.div`
  flex: 1; padding: 12px 12px 0 18px;
`;
const Field = styled.div`
  display: grid; grid-template-columns: 1fr 22px; column-gap: 11px; row-gap: 1px; align-items: center; margin-bottom: 3px;
  label { grid-column: 1 / -1; line-height: 15px; position: relative; font-size: 11px; }
`;
const Dot = styled.i`
  position: absolute; left: -13px; top: 4px; width: 7px; height: 7px; border-radius: 50%; background: #0e0; box-shadow: 1px 1px 0 #064;
`;
const TextBox = styled.input`
  height: 20px; width: 100%; border: 1px solid #e6e6e6; border-bottom-color: #868686; background: #fff; outline: 0; padding: 0 4px; font-size: 11px;
`;
const Browse = styled.button`
  width: 22px; height: 24px; border: 1px solid #cfcfcf; border-radius: 4px; background: #fdfdfd;
  display: inline-flex; align-items: center; justify-content: center;
`;
const SideScroll = styled.div`
  width: 17px; background: #fafafa; display: flex; flex-direction: column; justify-content: space-between; padding: 14px 0; align-items: center;
`;
const DialogFoot = styled.div`
  height: 43px; flex: none; display: flex; align-items: center; justify-content: flex-end; gap: 7px; padding-right: 9px;
`;
const Push = styled.button<{ $w: number }>`
  width: ${p => p.$w}px; height: 22px; border: 1px solid #cfcfcf; border-radius: 4px; background: #fdfdfd; font-size: 11px;
`;
const LookRow = styled.div`
  height: 32px; flex: none; display: flex; align-items: center; padding: 0 6px 0 4px; font-size: 11px;
  label { width: 58px; line-height: 14px; }
`;
const FileList = styled.ul`
  flex: 1; margin: 1px 6px 0 5px; background: #fff; border: 2px solid #777; border-width: 2px 1px 1px 2px; border-right-color: #ddd; border-bottom-color: #ddd;
  li { display: flex; align-items: center; gap: 3px; height: 20px; }
`;
const SaveGrid = styled.div`
  height: 79px; flex: none; display: grid; grid-template: 22px 22px / 82px 289px 72px; column-gap: 0; row-gap: 6px; padding: 10px 12px 0 8px; justify-content: start; font-size: 11px;
  label { line-height: 16px; } button { margin-left: 27px; }
  select { font-size: 11px; }
`;

/* ---------- catalog ---------- */
const LocRow = styled.div`
  height: 24px; flex: none; display: flex; align-items: center; gap: 4px; padding: 0 3px 0 2px;
  label { font-size: 11px; }
`;
const TreeFrame = styled.div`
  flex: 1; display: grid; grid-template: 1fr 17px / 1fr 17px; border: 2px solid #777; border-width: 2px 1px 1px 2px; border-right-color: #ddd; border-bottom-color: #ddd; margin: 1px 4px 3px 0;
`;
const Tree = styled.ul`
  background: #fff; overflow: hidden;
`;
const TreeRow = styled.li<{ $lv: number }>`
  height: 17px; display: flex; align-items: center; gap: 7px; padding-left: ${p => 7 + p.$lv * 19}px; white-space: nowrap;
`;
const Blank = styled.span`width: 9px; flex: none;`;
const NodeText = styled.span<{ $hot?: boolean }>`
  margin-left: -5px; padding: 0 2px; line-height: 17px; ${p => p.$hot && 'background: #efefef;'}
`;
const TreeV = styled.div`
  display: flex; justify-content: center; padding: 105px 0 18px;
  &::after { content: ''; width: 2px; background: #858585; border-radius: 1px; }
`;
const TreeH = styled.div`
  display: flex; align-items: center; gap: 1px;
  span { flex: 1; height: 6px; border-radius: 3px; background: #858585; margin-right: 10px; }
`;
const DockTabs = styled.div`
  height: 22px; flex: none; display: flex; align-items: flex-start; padding-left: 2px; background: #fbfbfb;
`;
const SideDock = styled.aside`
  width: 22px; flex: none; background: #fbfbfb; padding: 2px 0 0 2px;
`;
const SideTab = styled.button`
  width: 20px; height: 90px; border: 1px solid #8a8a8a; border-right: 0; border-radius: 5px 0 0 5px; background: #f3f3f3; color: #666;
  display: flex; flex-direction: column; align-items: center; gap: 3px; padding-top: 4px;
  span { writing-mode: vertical-rl; font-size: 11px; }
`;

type Node = [number, string, string, string?];
const nodes: Node[] = [
  [1, 'folderCon', 'C:\\Users\\CIVIL\\Desktop\\himanshu_24\\DSMW', '+'],
  [1, 'folderCon', 'C:\\Users\\CIVIL\\Desktop\\himanshu_24\\IND_adm', '+'],
  [1, 'folderCon', 'D:\\', '+'], [1, 'folderCon', 'D:\\5321PROJECT', '-'],
  [2, 'folder', '10MNIT', '+'], [2, 'folder', '2015', '+'], [2, 'folder', '2024', '+'], [2, 'folder', '20SATURDAY20', '-'],
  [3, 'raster', '2014 TO 2024.png', '+'], [3, 'raster', '2024 JAIPUR CITY.png', '+'], [3, 'pointShp', 'accuracy.shp'],
  [3, 'pointShp', 'ACCURACYASSESMENT.shp'], [3, 'raster', 'JAIPUR CITY IN 2014.png', '+'], [3, 'raster', 'POINTS .png', '+'],
  [2, 'folder', '5FRIDAY', '+'], [2, 'folderOpen', 'composite', '+'], [2, 'folder', 'FINAL2015', '+'],
  [2, 'folder', 'googleearthimage', '+'], [2, 'folder', 'LC09_L2SP_147041_20240323_20240324_02_T1', '+'],
  [2, 'folder', 'thursdayclasses', '+'], [2, 'mxd', 'classesfour.mxd'], [2, 'polyShp', 'CLASSIFICATION.shp'],
  [2, 'polyShp', 'CLASSIFICATION_TABLE.shp'], [2, 'raster', 'fcc', '+'], [2, 'raster', 'fccc1', '+'], [2, 'raster', 'fccc2', '+'],
  [2, 'raster', 'fccc3', '+'], [2, 'raster', 'mask', '+'], [2, 'raster', 'maskc1', '+'], [2, 'raster', 'maskc2', '+'],
  [2, 'raster', 'maskc3', '+'], [2, 'raster', 'MAXIMUMLHC.TIF'], [2, 'raster', 'mlc', '+'], [2, 'raster', 'new_mlc', '+'],
  [2, 'polyShp', 'TWOFIVECLASS.shp'], [1, 'folderCon', 'D:\\AKM5321', '+'], [1, 'folderCon', 'D:\\AKM5321\\MPROJ\\2024\\composite', '+'],
  [1, 'folderCon', 'D:\\GIS_MidTerm\\Input\\Ques1', '+'], [1, 'folderCon', 'D:\\jssd', '+'], [1, 'folderCon', 'D:\\minipro', '+'],
  [0, 'fTool', 'Toolboxes', '+'], [0, 'fServer', 'Database Servers', '+'], [0, 'fDb', 'Database Connections', '+'],
  [0, 'fGis', 'GIS Servers', '+'], [0, 'fCloud', 'My Hosted Services', '+'], [0, 'fCloud', 'Ready-To-Use Services', '+'],
];
const classified = [146, 146, 146, 101, 1, 101, 1, 146, 163, 1, 1, 1, 1, 1, 1, 1, 146, 9, 101, 146, 1, 163, 101, 9, 9, 101, 9, 101, 163, 101, 146, 163, 101, 9, 146, 163, 9, 163, 9, 101, 146];
const truth = [146, 146, 146, 101, 9, 101, 9, 146, 3, 9, 9, 9, 9, 9, 9, 9, 146, 9, 101, 146, 101, 163, 101, 163, 101, 101, 163, 101, 163, 101, 146, 163, 101, 146, 146, 101, 101, 101, 146, 101, 146];

/* ---------- status and taskbar ---------- */
const Status = styled.footer`
  height: 20px; flex: none; background: #f0f0f0; display: flex; justify-content: flex-end; align-items: center; font-size: 11px;
  span { width: 253px; white-space: pre; }
`;
const Taskbar = styled.footer`
  height: 48px; flex: none; display: grid; grid-template-columns: 1fr auto 1fr; align-items: center;
  border-top: 1px solid #b9aaa0; background: linear-gradient(90deg, #efdcc6, #f3dfd2 45%, #f2dbd6 70%, #f0dfd3);
`;
const Weather = styled.button`
  display: flex; align-items: center; gap: 2px; padding-left: 20px; text-align: left; line-height: 16px; color: #333; justify-self: start;
  small { display: block; font-size: 12px; color: #6a615c; }
`;
const Apps = styled.div`display: flex; align-items: center;`;
const App44 = styled.button<{ $mark?: 'dot' | 'bar' }>`
  width: 44px; height: 44px; display: flex; align-items: center; justify-content: center; position: relative;
  ${p => p.$mark && css`&::after { content: ''; position: absolute; bottom: 2px; width: ${p.$mark === 'bar' ? 15 : 6}px; height: 3px; border-radius: 2px; background: #857b76; }`}
`;
const SearchBox = styled.label`
  width: 218px; height: 31px; margin: 0 3px; border-radius: 16px; background: #faf4ef; border: 1px solid #dfcfc4;
  display: flex; align-items: center; gap: 10px; padding: 0 4px 0 9px;
  input { border: 0; background: none; outline: 0; flex: 1; min-width: 0; padding: 0; }
  input::placeholder { color: #5c5652; opacity: 1; }
`;
const Gap = styled.span`width: 89px;`;
const Tray = styled.div`
  justify-self: end; display: flex; align-items: center; padding-right: 19px; line-height: 16px; white-space: pre-line; color: #222;
`;
const Lang = styled.span`width: 40px; margin: 0 10px; text-align: center; font-size: 11px;`;
const Clock = styled.span`width: 73px; text-align: right; margin: 0 7px 0 6px;`;
const TrayIcon = styled.span<{ $after: number }>`margin-right: ${p => p.$after}px;`;

const Toolbars = () => (
  <>
    <BarRow>
      <Bar>
        <Grip /><B n="newDoc" /><B n="open" /><B n="save" /><B n="print" /><Sep />
        <B n="cut" /><B n="copy" /><B n="paste" /><B n="del" /><Sep /><B n="undo" /><B n="redo" /><Sep />
        <B n="add" /><Caret /><Sep />
        <Select label="Map scale" value="1:6,000" w={148} />
        <Sep /><B n="editPen" on /><Sep />
        <B n="toc" /><B n="catWin" /><B n="searchWin" /><B n="toolWin" /><B n="pyWin" /><Sep /><B n="model" />
        <MoreTab aria-label="Toolbar options"><CaretGlyph /></MoreTab>
      </Bar>
      <Bar $gap={2}>
        <Grip /><BarLabel $w={95}>Georeferencing<CaretGlyph /></BarLabel><Sep />
        <Select label="Georeferencing layer" value="MAXIMUMLHC.TIF" w={180} />
        <B n="cp" /><B n="cpAuto" /><B n="gcp" /><B n="gcp" /><B n="gcp" /><B n="linkWin" /><B n="linkTab" /><B n="rot" /><Caret />
        <BarInput aria-label="Rotation" />
        <MoreTab aria-label="Toolbar options"><CaretGlyph /></MoreTab>
      </Bar>
      <Bar $gap={35}>
        <Grip /><BarLabel $w={84}>Classification<CaretGlyph /></BarLabel><Sep />
        <Select label="Classification layer" value="MAXIMUMLHC.TIF" w={179} icon="diamond" classic />
        <B n="train" /><B n="gClassX" /><Sep /><B n="poly" /><Caret /><B n="gCursor" />
        <MoreTab aria-label="Toolbar options"><CaretGlyph /></MoreTab>
      </Bar>
    </BarRow>
    <BarRow>
      <Bar>
        <Grip /><B n="zin" /><B n="zout" /><B n="pan" /><B n="earth" /><Sep /><B n="fixIn" /><B n="fixOut" /><Sep />
        <B n="back" /><B n="fwd" /><Sep /><B n="select" /><Caret /><B n="clear" /><Sep /><B n="cursor" on /><Sep />
        <B n="info" /><B n="bolt" /><B n="html" /><Sep /><B n="measure" /><Sep /><B n="binoc" /><B n="route" /><B n="xy" /><Sep />
        <B n="time" /><Sep /><B n="magWin" />
        <MoreTab aria-label="Toolbar options"><CaretGlyph /></MoreTab>
      </Bar>
      <Bar $gap={2}>
        <Grip /><BarLabel $w={46}>Editor<CaretGlyph /></BarLabel><Sep /><B n="gArrow" /><B n="gArrowA" /><Sep />
        <B n="gLine" /><B n="gArc" /><B n="gPoly" /><Caret /><B n="gBurst" /><Sep />
        <B n="gVert" /><B n="gResh" /><B n="gCut" /><B n="gSplit" /><B n="gRot" /><Sep /><B n="gTable" /><B n="gSketch" /><Sep /><B n="gForm" />
        <MoreTab aria-label="Toolbar options"><CaretGlyph /></MoreTab>
      </Bar>
    </BarRow>
  </>
);

const Check = ({ text, on, sel }: { text: string; on?: boolean; sel?: boolean }) => (
  <label><Tick type="checkbox" defaultChecked={on} /><RowText $sel={sel}>{text}</RowText></label>
);
const Legend = ({ c, text }: { c: string; text: string }) => (
  <TocRow $pad={52}><Swatch $c={c} /><RowText>{text}</RowText></TocRow>
);

const Contents = () => (
  <Panel $w={259}>
    <PanelHead><span>Table Of Contents</span><B n="pin" w={16} /><B n="shut" w={16} /></PanelHead>
    <PanelTools><B n="byOrder" on /><B n="bySource" /><B n="byVis" /><B n="bySel" /><Sep /><B n="list" /></PanelTools>
    <TocList>
      <TocRow $pad={1}><Exp open /><TocIcon><Icon n="layers" /></TocIcon><RowText $strong>Layers</RowText></TocRow>
      <TocRow $pad={20}><Exp open /><Check text="accuracy" on sel /></TocRow>
      <TocRow $pad={49}><Icon n="quest" /></TocRow>
      <TocRow $pad={20}><Exp open /><Check text="MAXIMUMLHC.TIF" on /></TocRow>
      <TocRow $pad={73}><RowText>LULC_2024</RowText></TocRow>
      <Legend c="#0a0a0a" text="WATER_BODY" />
      <Legend c={D} text="BARREN_LAND" />
      <Legend c={R} text="BUILT_UP" />
      <Legend c={H} text="HILLY" />
      <Legend c={G} text="VEGETATION" />
      <TocRow $pad={20}><Exp open /><Check text="ACCURACYASSESMENT" /></TocRow>
      <TocRow $pad={49}><Icon n="quest" /></TocRow>
      <TocRow $pad={20}><Exp open /><Check text="Basemap" on /></TocRow>
      <TocRow $pad={39}><Exp /><Check text="World Imagery" on /></TocRow>
    </TocList>
  </Panel>
);

const Attributes = () => (
  <TableWindow>
    <PanelHead><span>Table</span></PanelHead>
    <PanelTools $h={27}>
      <B n="list" /><Caret /><Sep $wide /><B n="relate" /><Caret /><Sep />
      <B n="selTab" /><B n="switchSel" /><B n="clear" /><B n="gZoomSel" /><B n="del" />
    </PanelTools>
    <PanelHead><span>accuracy</span></PanelHead>
    <AttrFrame>
      <Attr>
        <colgroup><col style={{ width: 14 }} /><col style={{ width: 35 }} /><col style={{ width: 63 }} /><col style={{ width: 84 }} /><col style={{ width: 77 }} /></colgroup>
        <thead><tr><th aria-label="Row" /><th>FID</th><th>Shape *</th><th>Classified</th><th>GrndTruth</th></tr></thead>
        <tbody>
          {classified.map((c, i) => (
            <tr key={i}><td /><td>{i}</td><td>Point</td><td>{c}</td><td>{truth[i]}</td></tr>
          ))}
        </tbody>
      </Attr>
    </AttrFrame>
    <RecordBar>
      <B n="first" /><B n="prev" /><RecordInput aria-label="Record" defaultValue="42" /><B n="next" /><B n="last" /><Sep />
      <B n="allRec" on /><B n="selRec" /><Sep $wide />
      <span>(0 out of 50 Selected)</span>
    </RecordBar>
    <SheetTabs><SheetTab>accuracy</SheetTab></SheetTabs>
  </TableWindow>
);

const box1 = { $x: 518, $y: 59, $w: 590, $h: 411 };
const box2 = { $x: 579, $y: 474, $w: 492, $h: 333 };

const ComputeDialog = () => (
  <Dialog {...box1} role="dialog" aria-label="Compute Confusion Matrix">
    <DialogHead $end={14}>
      <Icon n="hammer" />Compute Confusion Matrix
      <WindowBtns><button aria-label="Minimize"><Icon n="wMin" /></button><button aria-label="Maximize"><Icon n="wMax" /></button><button aria-label="Close"><Icon n="wX" /></button></WindowBtns>
    </DialogHead>
    <DialogBody>
      <Fields>
        <Field>
          <label htmlFor="inPts">Input Accuracy Assessment Points</label>
          <Select id="inPts" value="accuracy" classic />
          <Browse aria-label="Browse input"><Icon n="open" /></Browse>
        </Field>
        <Field>
          <label htmlFor="outMx"><Dot />Output Confusion Matrix</label>
          <TextBox id="outMx" />
          <Browse aria-label="Browse output"><Icon n="open" /></Browse>
        </Field>
      </Fields>
      <SideScroll><Icon n="chevUp" /><Icon n="chevDn" /></SideScroll>
    </DialogBody>
    <DialogFoot><Push $w={74}>OK</Push><Push $w={74}>Cancel</Push><Push $w={88}>Environments...</Push><Push $w={96}>Show Help &gt;&gt;</Push></DialogFoot>
  </Dialog>
);

const OutputDialog = () => (
  <Dialog {...box2} role="dialog" aria-label="Output Confusion Matrix">
    <DialogHead $end={6}>Output Confusion Matrix<WindowBtns><button aria-label="Close"><Icon n="wX" /></button></WindowBtns></DialogHead>
    <LookRow>
      <label htmlFor="look">Look in:</label>
      <Select id="look" value="20SATURDAY20" w={194} icon="folder" />
      <B n="up" w={34} /><B n="house" w={16} /><B n="dbHouse" w={28} /><Sep $wide /><B n="gridBlue" /><Caret /><Sep $wide /><B n="connect" w={24} /><Sep $wide />
      <B n="newFolder" /><B n="newDb" /><B n="newTool" w={24} />
    </LookRow>
    <FileList><li><Icon n="dbf" />confusion_matrix</li></FileList>
    <SaveGrid>
      <label htmlFor="fname">Name:</label><TextBox id="fname" defaultValue="confusionmatrix1" /><Push $w={73}>Save</Push>
      <label htmlFor="ftype">Save as type:</label><Select id="ftype" value="Tables" /><Push $w={73}>Cancel</Push>
    </SaveGrid>
  </Dialog>
);

const Catalog = () => (
  <Panel $w={332}>
    <PanelHead><span>Catalog</span><B n="pin" w={16} /><B n="shut" w={16} /></PanelHead>
    <PanelTools $white $h={25}>
      <B n="yBack" /><Caret /><B n="gNext" w={28} /><B n="gUp" /><B n="house" w={24} /><B n="dbHouse" /><Sep $wide /><B n="gridGrey" /><Caret /><Sep $wide />
      <B n="connect" w={26} /><Sep $wide /><B n="treeIc" /><Sep $wide /><B n="list" />
    </PanelTools>
    <LocRow><label htmlFor="loc">Location:</label><Select id="loc" value="ACCURACYASSESMENT.shp" icon="pointShp" /></LocRow>
    <TreeFrame>
      <Tree>
        {nodes.map(([lv, ic, text, e]) => (
          <TreeRow key={text} $lv={lv}>
            {e ? <Exp open={e === '-'} /> : <Blank />}
            <Icon n={ic} />
            <NodeText $hot={text === 'composite'}>{text}</NodeText>
          </TreeRow>
        ))}
      </Tree>
      <TreeV />
      <TreeH><Icon n="arrL" /><span /><Icon n="arrR" /></TreeH>
    </TreeFrame>
    <DockTabs><SheetTab><Icon n="catWin" />Catalog</SheetTab><SheetTab $off><Icon n="searchWin" />Search</SheetTab></DockTabs>
  </Panel>
);

const WeatherArt = () => (
  <svg width="28" height="32" viewBox="0 0 28 32">
    <circle cx="11" cy="18" r="10" fill="#f6951e" />
    <path d="M9 26a4 4 0 010-7 5 5 0 019 0 3.500 3.500 0 010 7z" fill="#a9cdf5" />
    <circle cx="18" cy="8" r="7.500" fill="#c42b1c" />
    <text x="18" y="12" fontSize="11" fill="#fff" textAnchor="middle">1</text>
  </svg>
);
const EarthArt = () => (
  <svg width="44" height="24" viewBox="0 0 44 24">
    <path d="M3 4l2-3 2 3 3-1-1 4 1 4-3-1-3 3-1-4-3-2z" fill="#f2a31b" />
    <path d="M2 16c5-1 8 3 8 6-5 0-8-2-8-6zM34 1c3 2 4 6 1 9-3-3-3-6-1-9zM42 12c1 5-2 9-8 10 0-5 3-9 8-10z" fill="#6fae2e" />
    <path d="M40 4l2 2 2 0-2 3-3-1z" fill="#f2a31b" />
    <circle cx="22" cy="12" r="10.500" fill="#5b8fe0" />
    <path d="M13 8c3-6 9-7 11-5s-3 3-2 6-3 4-2 7-4 0-5-3-3-2-2-5zM25 9c4-2 7 0 7 4s-4 8-6 7 0-4-2-6 0-4 1-5z" fill="#3f8f3a" />
  </svg>
);
const Copilot = () => (
  <svg width="24" height="26" viewBox="0 0 24 26">
    <path d="M6 1h8l3 5-4 13H5C0 19 1 13 3 8s1-7 3-7z" fill="#2f8fe0" />
    <path d="M17 6c6 0 7 3 6 7s-2 7-6 7H9l4-13z" fill="#c95fd0" />
    <path d="M3 9l8-2-3 10-5 1c-3-2-1-6 0-9z" fill="#5fc25a" />
    <rect x="4" y="14" width="19" height="11" rx="2" fill="#f7c531" />
    <text x="13.500" y="23" fontSize="9" fontWeight="700" fill="#222" textAnchor="middle">PRE</text>
  </svg>
);

export default function App() {
  return (
    <Page>
      <Global />
      <TitleBar>
        <Icon n="arc" />Untitled - ArcMap
        <WindowBtns $end={17}><button aria-label="Minimize"><Icon n="wMin" /></button><button aria-label="Restore"><Icon n="wRest" /></button><button aria-label="Close"><Icon n="wX" /></button></WindowBtns>
      </TitleBar>
      <MenuBar>
        {['File', 'Edit', 'View', 'Bookmarks', 'Insert', 'Selection', 'Geoprocessing', 'Customize', 'Windows', 'Help'].map(m => <button key={m}>{m}</button>)}
      </MenuBar>
      <Toolbars />
      <Work>
        <Contents />
        <MapPane>
          <MapView><Imagery /><NoteMark><Icon n="note" s={18} /></NoteMark></MapView>
          <VScroll />
          <HScroll>
            <ViewBtn $on aria-label="Data view"><Icon n="dataV" s={13} /></ViewBtn><ViewBtn aria-label="Layout view"><Icon n="layoutV" s={13} /></ViewBtn><Sep />
            <ViewBtn aria-label="Refresh"><Icon n="refresh" s={11} /></ViewBtn><ViewBtn aria-label="Pause"><Icon n="pause" s={11} /></ViewBtn>
            <Icon n="arrL" s={14} /><HThumb /><Icon n="arrR" s={14} />
          </HScroll>
          <Attributes />
          <DialogShadow {...box1} />
          <DialogShadow {...box2} />
          <ComputeDialog />
          <OutputDialog />
        </MapPane>
        <Catalog />
        <SideDock><SideTab><Icon n="toolWin" /><span>ArcToolbox</span></SideTab></SideDock>
      </Work>
      <Status><span>582109.001  2986268.405 Meters</span></Status>
      <Taskbar>
        <Weather><WeatherArt /><span>37°C<small>Mostly sunny</small></span></Weather>
        <Apps>
          <App44 aria-label="Start"><Icon n="win" s={23} /></App44>
          <SearchBox><Icon n="mag" /><input aria-label="Search" placeholder="Search" /><EarthArt /></SearchBox>
          <App44 aria-label="Task view"><Icon n="taskView" s={22} /></App44>
          <Gap />
          <App44 $mark="bar" aria-label="App" />
          <App44 aria-label="Word"><Icon n="word" s={24} /></App44>
          <App44 as="span" />
          <App44 $mark="dot" aria-label="Explorer"><Icon n="explorer" s={24} /></App44>
          <App44 $mark="dot" aria-label="ArcMap"><Icon n="arc" s={24} /></App44>
          <App44 $mark="dot" aria-label="Edge"><Icon n="edge" s={24} /></App44>
          <App44 aria-label="Chrome"><Icon n="chrome" s={24} /></App44>
        </Apps>
        <Tray>
          <Icon n="caretUp" /><Lang>{'ENG\nIN'}</Lang>
          <TrayIcon $after={9}><Icon n="wifi" /></TrayIcon><Icon n="vol" />
          <Clock>{'14:47\n22-04-2024'}</Clock>
          <TrayIcon $after={17}><Icon n="bell" /></TrayIcon><Copilot />
        </Tray>
      </Taskbar>
    </Page>
  );
}
